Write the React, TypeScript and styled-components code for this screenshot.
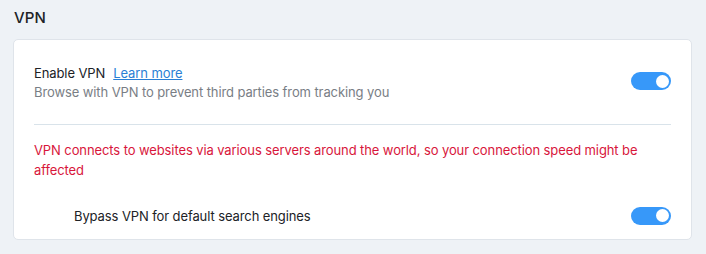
import * as React from 'react';
import styled, { createGlobalStyle } from 'styled-components';

const GlobalStyle = createGlobalStyle`
  html, body {
    margin: 0;
    padding: 0;
    background: #eef2f6;
  }
  body {
    font-family: Inter, "Noto Sans", sans-serif;
    -webkit-font-smoothing: antialiased;
  }
`;

const Page = styled.div`
  width: 706px;
  height: 254px;
  padding: 9px 14px 0 13px;
  box-sizing: border-box;
`;

const SectionTitle = styled.h2`
  margin: 0 0 12px 1px;
  font-size: 15px;
  font-weight: 500;
  line-height: 18px;
  color: #202226;
  letter-spacing: 0.1px;
`;

const Card = styled.div`
  background: #ffffff;
  border: 1px solid #dfe4ea;
  border-radius: 5px;
  padding: 24px 20px 14px 20px;
`;

const Row = styled.div<{ $indent?: boolean }>`
  display: flex;
  align-items: center;
  justify-content: space-between;
  padding-left: ${(p) => (p.$indent ? '40px' : '0')};
`;

const Labels = styled.div`
  display: flex;
  flex-direction: column;
  gap: 1px;
`;

const Label = styled.div`
  font-size: 13px;
  line-height: 18px;
  letter-spacing: -0.1px;
  color: #202226;
`;

const Link = styled.a`
  margin-left: 8px;
  color: #2a7fd5;
  text-decoration: underline;
  cursor: pointer;
`;

const Description = styled.div`
  font-size: 13px;
  line-height: 18px;
  letter-spacing: -0.1px;
  color: #797e85;
`;

const Divider = styled.hr`
  border: 0;
  border-top: 1px solid #d9e3ea;
  margin: 23px 0 15px;
`;

const Warning = styled.p`
  margin: 0 0 27px;
  font-size: 13px;
  line-height: 20px;
  letter-spacing: -0.1px;
  color: #d8163b;
`;

const ToggleTrack = styled.button<{ $on: boolean; $lift: number }>`
  position: relative;
  width: 40px;
  height: 18px;
  border: 0;
  padding: 0;
  margin-top: ${(p) => -p.$lift}px;
  border-radius: 9px;
  background: ${(p) => (p.$on ? '#3798f9' : '#c4ccd4')};
  cursor: pointer;
  flex-shrink: 0;
`;

const ToggleKnob = styled.span<{ $on: boolean }>`
  position: absolute;
  top: 2.5px;
  left: ${(p) => (p.$on ? '24.5px' : '2.5px')};
  width: 13px;
  height: 13px;
  border-radius: 50%;
  background: #ffffff;
`;

function Toggle({ on, lift = 0 }: { on: boolean; lift?: number }) {
  return (
    <ToggleTrack $on={on} $lift={lift} aria-pressed={on}>
      <ToggleKnob $on={on} />
    </ToggleTrack>
  );
}

export default function App() {
  return (
    <>
      <GlobalStyle />
      <Page>
        <SectionTitle>VPN</SectionTitle>
        <Card>
          <Row>
            <Labels>
              <Label>
                Enable VPN<Link>Learn more</Link>
              </Label>
              <Description>Browse with VPN to prevent third parties from tracking you</Description>
            </Labels>
            <Toggle on lift={3} />
          </Row>
          <Divider />
          <Warning>
            VPN connects to websites via various servers around the world, so your connection speed might be affected
          </Warning>
          <Row $indent>
            <Label>Bypass VPN for default search engines</Label>
            <Toggle on lift={1} />
          </Row>
        </Card>
      </Page>
    </>
  );
}
